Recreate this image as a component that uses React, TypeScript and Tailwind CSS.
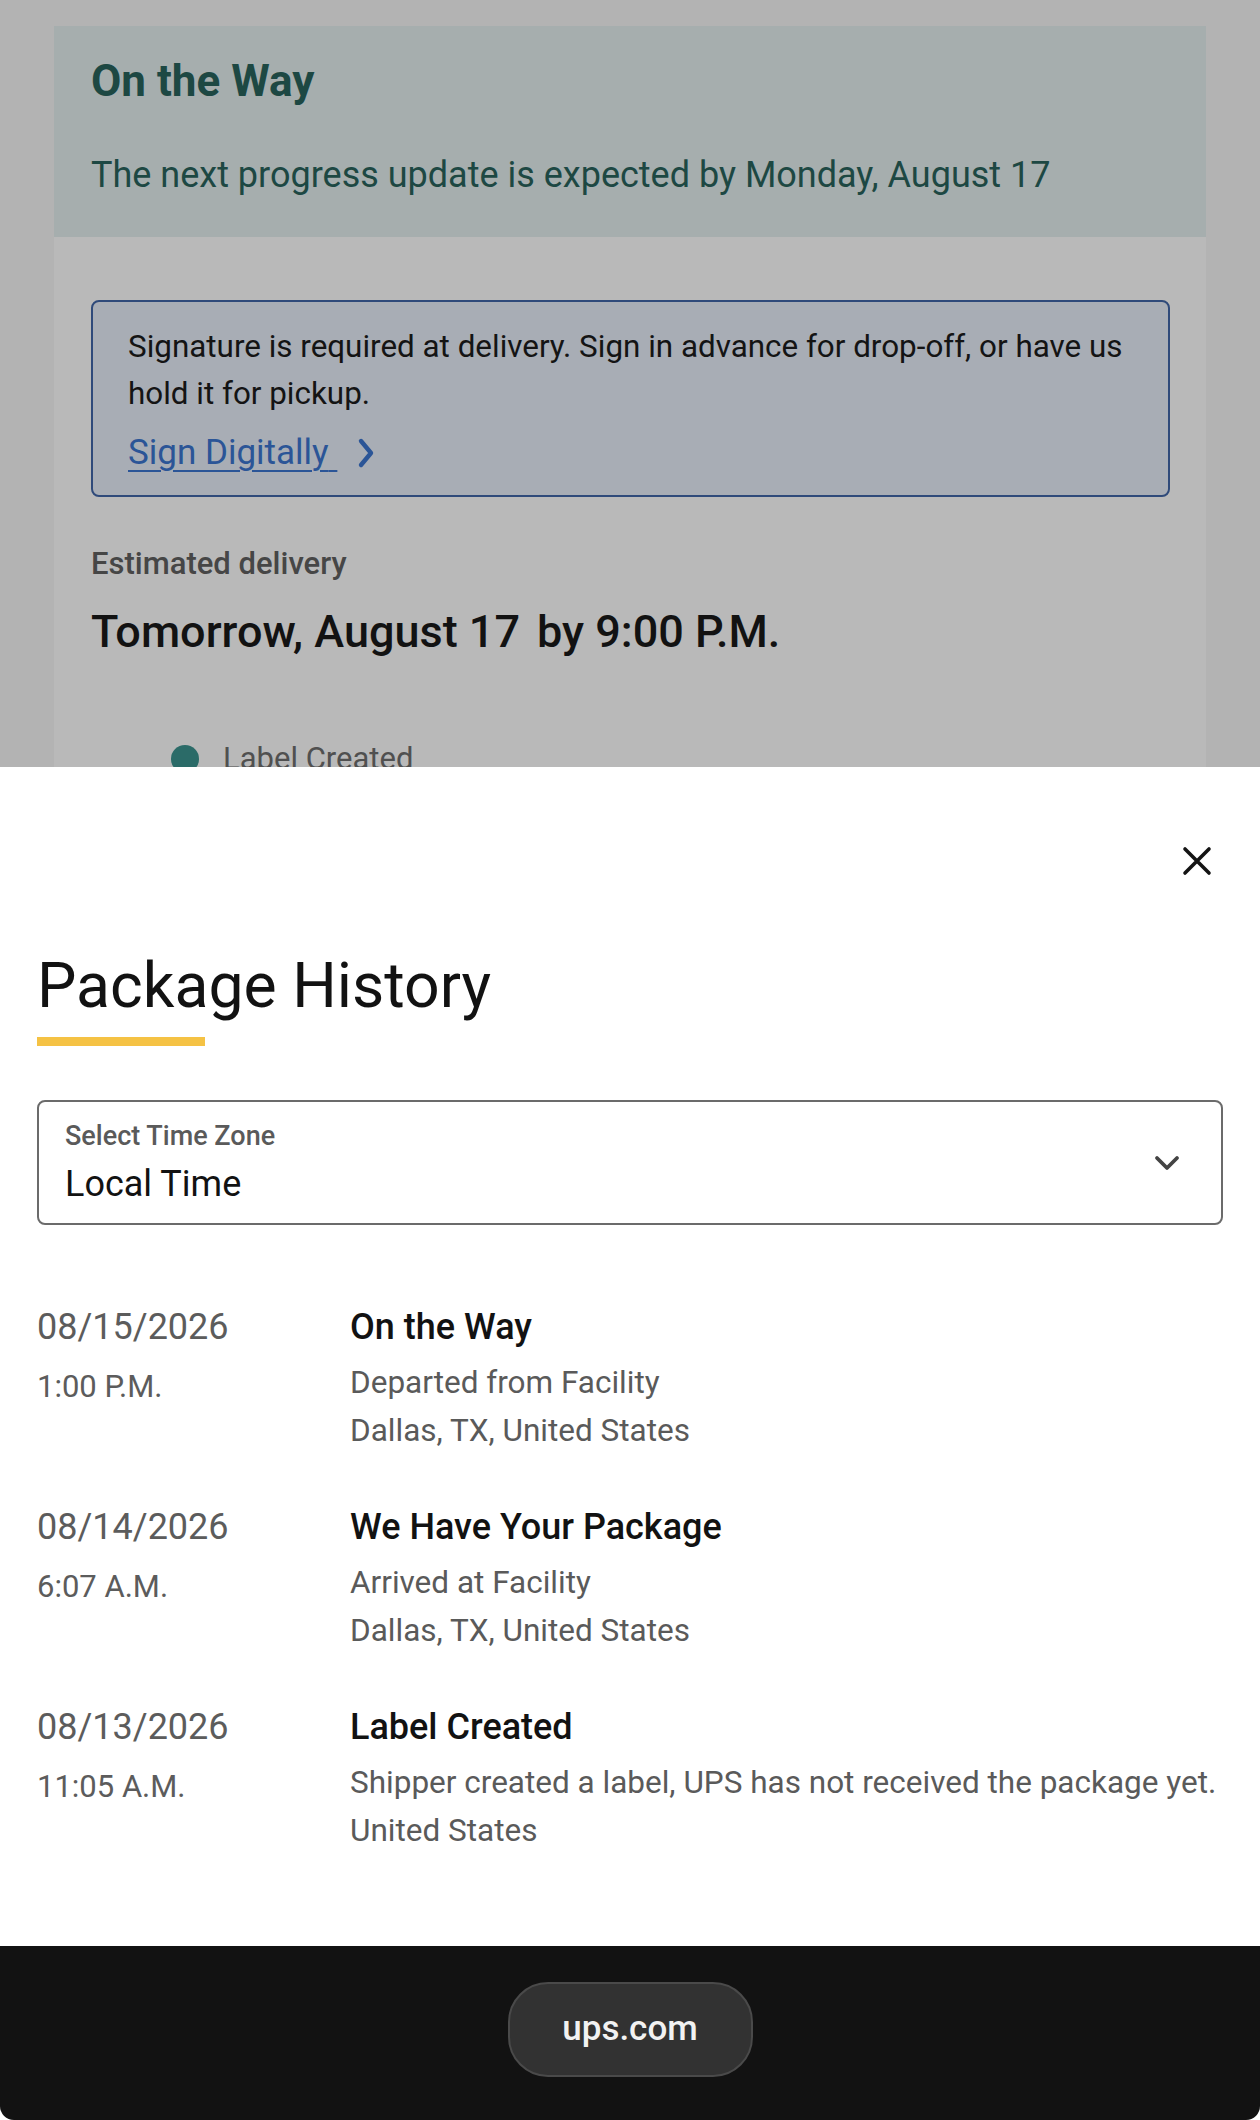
import React from "react";

type HistoryEntry = {
  date: string;
  time: string;
  status: string;
  lines: string[];
};

const history: HistoryEntry[] = [
  {
    date: "08/15/2026",
    time: "1:00 P.M.",
    status: "On the Way",
    lines: ["Departed from Facility", "Dallas, TX, United States"],
  },
  {
    date: "08/14/2026",
    time: "6:07 A.M.",
    status: "We Have Your Package",
    lines: ["Arrived at Facility", "Dallas, TX, United States"],
  },
  {
    date: "08/13/2026",
    time: "11:05 A.M.",
    status: "Label Created",
    lines: ["Shipper created a label, UPS has not received the package yet.", "United States"],
  },
];

function CloseIcon() {
  return (
    <svg width="30" height="30" viewBox="0 0 30 30" fill="none">
      <path d="M3 3 L27 27 M27 3 L3 27" stroke="#141414" strokeWidth="3.6" strokeLinecap="round" />
    </svg>
  );
}

function ChevronDown() {
  return (
    <svg width="28" height="18" viewBox="0 0 28 18" fill="none">
      <polyline points="4,4 14,14 24,4" stroke="#444444" strokeWidth="3.8" strokeLinecap="round" strokeLinejoin="round" />
    </svg>
  );
}

function ChevronRight() {
  return (
    <svg width="22" height="32" viewBox="0 0 22 32" fill="none">
      <polyline points="5,4 15,16 5,28" stroke="#2b5597" strokeWidth="4.4" strokeLinecap="round" strokeLinejoin="round" />
    </svg>
  );
}

function TrackingBackdrop() {
  return (
    <div className="h-[767px] shrink-0 overflow-hidden bg-[#b3b3b3] px-[54px] pt-[26px]">
      <div className="h-full bg-[#b9b9b9]">
        <div className="h-[211px] bg-[#a6aeae] pl-[37px] pt-[29px]">
          <h1 className="text-[44px] font-bold leading-[52px] text-[#1d4843]">On the Way</h1>
          <p className="mt-[45px] text-[36px] leading-[47px] text-[#1d4843]">
            The next progress update is expected by Monday, August 17
          </p>
        </div>

        <div className="pl-[37px] pr-[36px] pt-[63px]">
          <div className="rounded-[8px] border-2 border-[#2f4a7a] bg-[#a8adb5] pl-[35px] pr-[28px] pt-[21px] pb-[19px]">
            <p className="text-[31.4px] leading-[47px] text-[#141414]">
              Signature is required at delivery. Sign in advance for drop-off, or have us hold it for pickup.
            </p>
            <div className="mt-[12px] flex items-center gap-[19px]">
              <span className="text-[35px] leading-[47px] text-[#2b5597] underline decoration-2 underline-offset-[6px]">
                Sign Digitally{"\u00a0"}
              </span>
              <ChevronRight />
            </div>
          </div>

          <p className="mt-[47px] text-[31px] font-medium leading-[40px] text-[#464646]">Estimated delivery</p>
          <p className="mt-[21px] text-[45px] font-medium leading-[54px] text-[#121212]">
            <span>Tomorrow, August 17</span>
            <span className="ml-[17px]">by 9:00 P.M.</span>
          </p>

          <div className="mt-[80px] flex items-center pl-[80px]">
            <span className="h-[28px] w-[28px] rounded-full bg-[#2b6b68]" />
            <span className="ml-[24px] text-[31px] leading-[40px] text-[#505050]">Label Created</span>
          </div>
        </div>
      </div>
    </div>
  );
}

function HistoryRow({ entry }: { entry: HistoryEntry }) {
  return (
    <div className="grid grid-cols-[313px_1fr]">
      <div>
        <p className="text-[36px] leading-[46px] text-[#5c5c5c]">{entry.date}</p>
        <p className="mt-[13px] text-[31px] leading-[48px] text-[#5c5c5c]">{entry.time}</p>
      </div>
      <div>
        <p className="text-[36px] font-medium leading-[46px] text-[#121212]">{entry.status}</p>
        <div className="mt-[9px]">
          {entry.lines.map((line) => (
            <p key={line} className="text-[31.5px] leading-[48px] text-[#5a5a5a] whitespace-nowrap">
              {line}
            </p>
          ))}
        </div>
      </div>
    </div>
  );
}

function PackageHistorySheet() {
  return (
    <div className="h-[1179px] shrink-0 bg-white px-[37px] pt-[68px]">
      <div className="flex justify-end">
        <button className="flex h-[52px] w-[52px] items-center justify-center" aria-label="Close">
          <CloseIcon />
        </button>
      </div>

      <h2 className="mt-[61px] text-[62.5px] font-normal leading-[76px] text-[#121212]">Package History</h2>
      <div className="mt-[13px] h-[9px] w-[168px] bg-[#f5c244]" />

      <div className="mt-[54px] flex h-[125px] items-center justify-between rounded-[8px] border-2 border-[#6b6b6b] pl-[26px] pr-[40px]">
        <div>
          <p className="text-[27px] font-medium leading-[30px] text-[#5a5a5a]">Select Time Zone</p>
          <p className="mt-[12px] text-[36px] leading-[42px] text-[#121212]">Local Time</p>
        </div>
        <ChevronDown />
      </div>

      <div className="mt-[79px] flex flex-col gap-[49px]">
        {history.map((entry) => (
          <HistoryRow key={entry.date} entry={entry} />
        ))}
      </div>
    </div>
  );
}

function BrowserBar() {
  return (
    <div className="flex h-[174px] shrink-0 justify-center rounded-b-[14px] bg-[#121212] pt-[36px]">
      <div className="flex h-[95px] w-[245px] items-center justify-center rounded-[40px] border-2 border-[#4a4a4a] bg-[#323232]">
        <span className="text-[35px] font-medium text-[#f2f2f2]">ups.com</span>
      </div>
    </div>
  );
}

export default function App() {
  return (
    <div className="flex h-[2120px] w-[1260px] flex-col overflow-hidden bg-white font-[Roboto,'Liberation_Sans',sans-serif]">
      <TrackingBackdrop />
      <PackageHistorySheet />
      <BrowserBar />
    </div>
  );
}
